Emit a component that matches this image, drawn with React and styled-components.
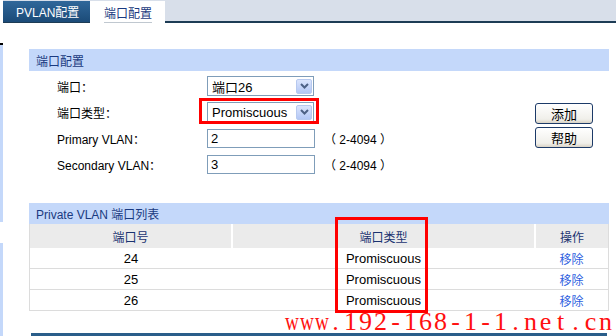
import React from "react";
import styled, { createGlobalStyle } from "styled-components";

const GlobalStyle = createGlobalStyle`
  html, body {
    margin: 0;
    padding: 0;
    background: #ffffff;
    overflow: hidden;
  }
  body {
    font-family: "Liberation Sans", "Noto Sans CJK SC", sans-serif;
    font-size: 12px;
    color: #000000;
  }
`;

const Page = styled.div`
  width: 616px;
  height: 336px;
  overflow: hidden;
`;

const TabBar = styled.div`
  display: flex;
  align-items: flex-start;
  height: 21px;
  margin-left: 3px;
  background: #d8dfea;
  border-bottom: 2px solid #1d3c55;
`;

const Tab = styled.div`
  box-sizing: border-box;
  height: ${(p) => (p.active ? "24px" : "21px")};
  margin-top: 1px;
  width: ${(p) => p.w}px;
  padding-left: ${(p) => p.pl}px;
  display: flex;
  align-items: center;
  font-size: 12px;
  color: ${(p) => (p.active ? "#1a3a80" : "#ffffff")};
  background: ${(p) =>
    p.active ? "#ffffff" : "linear-gradient(#30679a, #1b4b78)"};
  position: relative;
  z-index: 1;
`;

const TabLabel = styled.span`
  padding-bottom: 1px;
  border-bottom: ${(p) => (p.underline ? "1px solid #c0c8d0" : "none")};
  margin-top: ${(p) => (p.underline ? "1px" : "0")};
`;

const Body = styled.div`
  display: flex;
`;

const Rail = styled.div`
  width: 3px;
  flex-shrink: 0;
  display: flex;
  flex-direction: column;
  padding-top: 20px;
`;

const RailPiece = styled.div`
  height: ${(p) => p.h}px;
  background: ${(p) => p.c};
`;

const Main = styled.div`
  flex: 1;
  margin-left: 26px;
  margin-right: 7px;
  display: flex;
  flex-direction: column;
`;

const Panel = styled.div`
  margin-top: 26px;
`;

const PanelHeader = styled.div`
  height: ${(p) => p.h || 22}px;
  background: #c4d8fa;
  color: #1a3a80;
  font-size: 12px;
  display: flex;
  align-items: center;
  padding-left: 7px;
`;

const PanelBody = styled.div`
  display: flex;
  justify-content: space-between;
  padding-top: 2px;
  padding-left: 28px;
  padding-right: 16px;
`;

const Form = styled.div`
  display: flex;
  flex-direction: column;
`;

const Row = styled.div`
  height: 26px;
  display: flex;
  align-items: center;
`;

const Label = styled.div`
  width: 150px;
  font-size: 12px;
`;

const Field = styled.div`
  position: relative;
`;

const Select = styled.div`
  box-sizing: border-box;
  width: 107px;
  height: 20px;
  border: 1px solid #7f9db9;
  display: flex;
  align-items: center;
  justify-content: space-between;
  padding: 0 1px 0 4px;
  font-size: 13px;
  background: #ffffff;
`;

const Arrow = styled.div`
  box-sizing: border-box;
  width: 16px;
  height: 15px;
  border: 1px solid #b7c9ef;
  border-radius: 2px;
  background: linear-gradient(#dbe5fd, #b3c7f5);
  display: flex;
  align-items: center;
  justify-content: center;
`;

const Input = styled.div`
  box-sizing: border-box;
  width: 108px;
  height: 19px;
  border: 1px solid #7f9db9;
  padding-left: 3px;
  display: flex;
  align-items: center;
  font-size: 13px;
`;

const Range = styled.span`
  margin-left: 9px;
  font-size: 12px;
`;

const Mark = styled.div`
  position: absolute;
  box-sizing: border-box;
  border: 3px solid #ff0000;
  left: ${(p) => p.x}px;
  top: ${(p) => p.y}px;
  width: ${(p) => p.w}px;
  height: ${(p) => p.h}px;
  pointer-events: none;
`;

const Buttons = styled.div`
  display: flex;
  flex-direction: column;
  gap: 3px;
  padding-top: 30px;
`;

const Button = styled.button`
  box-sizing: border-box;
  width: 58px;
  height: 21px;
  border: 1px solid #1c3a68;
  border-radius: 3px;
  background: linear-gradient(#ffffff, #f0efea 80%, #d9d3c6);
  font-family: "Liberation Sans", "Noto Sans CJK SC", sans-serif;
  font-size: 13px;
  color: #000000;
  padding: 0;
`;

const TableWrap = styled.div`
  position: relative;
`;

const Table = styled.table`
  width: 100%;
  border-collapse: collapse;
  border-left: 1px solid #dcdcdc;
  border-right: 1px solid #dcdcdc;
`;

const Th = styled.th`
  height: 24px;
  padding: 0;
  background: #ebebeb;
  color: #1a3370;
  font-weight: normal;
  font-size: 12px;
  border-left: ${(p) => (p.first ? "none" : "2px solid #ffffff")};
  width: ${(p) => p.w}px;
`;

const Td = styled.td`
  height: 20px;
  padding: 0;
  text-align: center;
  font-size: ${(p) => (p.link ? "12px" : "13px")};
  color: ${(p) => (p.link ? "#2f5fe0" : "#000000")};
  border-bottom: 1px solid #dcdcdc;
`;

const Footer = styled.div`
  height: 22px;
  display: flex;
  justify-content: flex-end;
  align-items: flex-end;
  margin-right: -4px;
  overflow: visible;
`;

const Watermark = styled.div`
  display: flex;
  font-family: "Liberation Serif", serif;
  font-size: 26px;
  line-height: 22px;
  height: 22px;
  color: #ff1010;
  white-space: nowrap;
`;

const Glyph = styled.span`
  display: inline-block;
  width: 15px;
  text-align: center;
  transform: ${(p) => (p.wide ? "scaleX(0.74)" : "none")};
`;

const BottomLine = styled.div`
  height: 3px;
  margin: 0 2px;
  background: #2a5e8a;
`;

const Chevron = () => (
  <svg width="9" height="6" viewBox="0 0 9 6">
    <path d="M1 1 L4.5 4.5 L8 1" fill="none" stroke="#4d6185" strokeWidth="2" />
  </svg>
);

const rows = ["24", "25", "26"];
const mark = "www.192-168-1-1.net.cn";

export default function App() {
  return (
    <Page>
      <GlobalStyle />
      <TabBar>
        <Tab w={87} pl={13}>
          <TabLabel>PVLAN配置</TabLabel>
        </Tab>
        <Tab active w={75} pl={14}>
          <TabLabel underline>端口配置</TabLabel>
        </Tab>
      </TabBar>
      <Body>
        <Rail>
          <RailPiece h={2} c="#000000" />
          <RailPiece h={177} c="#c4d8fa" />
          <RailPiece h={21} c="#ffffff" />
          <RailPiece h={100} c="#c4d8fa" />
        </Rail>
        <Main>
          <Panel>
            <PanelHeader>端口配置</PanelHeader>
            <PanelBody>
              <Form>
                <Row>
                  <Label>端口：</Label>
                  <Field>
                    <Select>
                      端口26
                      <Arrow>
                        <Chevron />
                      </Arrow>
                    </Select>
                  </Field>
                </Row>
                <Row>
                  <Label>端口类型：</Label>
                  <Field>
                    <Select>
                      Promiscuous
                      <Arrow>
                        <Chevron />
                      </Arrow>
                    </Select>
                    <Mark x={-8} y={-4} w={120} h={26} />
                  </Field>
                </Row>
                <Row>
                  <Label>Primary VLAN：</Label>
                  <Input>2</Input>
                  <Range>（ 2-4094 ）</Range>
                </Row>
                <Row>
                  <Label>Secondary VLAN：</Label>
                  <Input>3</Input>
                  <Range>（ 2-4094 ）</Range>
                </Row>
              </Form>
              <Buttons>
                <Button>添加</Button>
                <Button>帮助</Button>
              </Buttons>
            </PanelBody>
          </Panel>
          <Panel>
            <PanelHeader h={21}>Private VLAN 端口列表</PanelHeader>
            <TableWrap>
              <Table>
                <thead>
                  <tr>
                    <Th first w={201}>端口号</Th>
                    <Th w={301}>端口类型</Th>
                    <Th>操作</Th>
                  </tr>
                </thead>
                <tbody>
                  {rows.map((r) => (
                    <tr key={r}>
                      <Td>{r}</Td>
                      <Td>Promiscuous</Td>
                      <Td link>移除</Td>
                    </tr>
                  ))}
                </tbody>
              </Table>
              <Mark x={306} y={-7} w={93} h={96} />
            </TableWrap>
          </Panel>
          <Footer>
            <Watermark aria-label={mark}>
              {mark.split("").map((ch, i) => (
                <Glyph key={i} wide={ch === "w"}>
                  {ch}
                </Glyph>
              ))}
            </Watermark>
          </Footer>
          <BottomLine />
        </Main>
      </Body>
    </Page>
  );
}
